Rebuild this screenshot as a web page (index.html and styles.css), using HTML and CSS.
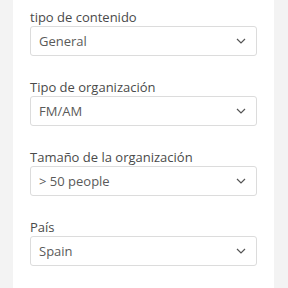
FILE: index.html
```html
<!DOCTYPE html>
<html lang="es">
  <head>
    <meta charset="UTF-8" />
    <meta name="viewport" content="width=device-width, initial-scale=1.0" />
    <title>Perfil</title>
    <link rel="stylesheet" href="styles.css">
  </head>
  <body>
    <div class="panel">
      <div class="field">
        <label for="content-type">tipo de contenido</label>
        <div class="select-wrap">
          <select id="content-type"><option>General</option></select>
          <svg class="chevron" width="10" height="6" viewBox="0 0 10 6"><path d="M1 1l4 4 4-4" fill="none" stroke="#555" stroke-width="1.2"/></svg>
        </div>
      </div>
      <div class="field">
        <label for="org-type">Tipo de organización</label>
        <div class="select-wrap">
          <select id="org-type"><option>FM/AM</option></select>
          <svg class="chevron" width="10" height="6" viewBox="0 0 10 6"><path d="M1 1l4 4 4-4" fill="none" stroke="#555" stroke-width="1.2"/></svg>
        </div>
      </div>
      <div class="field">
        <label for="org-size">Tamaño de la organización</label>
        <div class="select-wrap">
          <select id="org-size"><option>&gt; 50 people</option></select>
          <svg class="chevron" width="10" height="6" viewBox="0 0 10 6"><path d="M1 1l4 4 4-4" fill="none" stroke="#555" stroke-width="1.2"/></svg>
        </div>
      </div>
      <div class="field">
        <label for="country">País</label>
        <div class="select-wrap">
          <select id="country"><option>Spain</option></select>
          <svg class="chevron" width="10" height="6" viewBox="0 0 10 6"><path d="M1 1l4 4 4-4" fill="none" stroke="#555" stroke-width="1.2"/></svg>
        </div>
      </div>
    </div>
  </body>
</html>
```

FILE: styles.css
```css
body {
  font-family: "Open Sans", "DejaVu Sans", sans-serif;
  margin: 0;
  padding: 0;
  background-color: #f3f3f3;
  height: 100vh;
  overflow: hidden;
}

.panel {
  background-color: #ffffff;
  margin: 0 14px 0 13px;
  padding: 9px 17px 0;
  height: 100%;
  box-sizing: border-box;
}

.field {
  margin-bottom: 23px;
}

label {
  display: block;
  font-size: 13px;
  line-height: 16px;
  color: #4a4a4a;
  margin-bottom: 1px;
}

.select-wrap {
  position: relative;
}

select {
  appearance: none;
  -webkit-appearance: none;
  width: 100%;
  height: 30px;
  padding: 0 8px;
  border: 1px solid #dcdcdc;
  border-radius: 3px;
  background-color: #fff;
  font-family: inherit;
  font-size: 13px;
  color: #5a5a5a;
  box-sizing: border-box;
}

.chevron {
  position: absolute;
  right: 11px;
  top: 12px;
  pointer-events: none;
}
```
